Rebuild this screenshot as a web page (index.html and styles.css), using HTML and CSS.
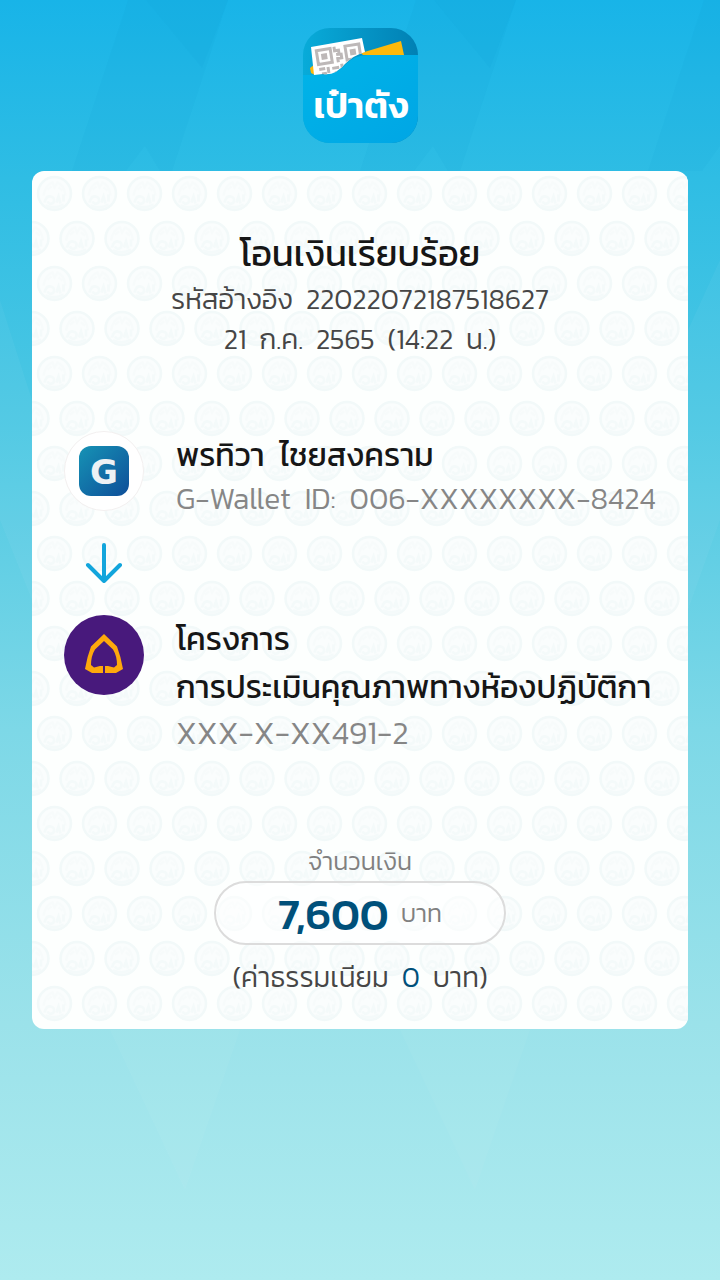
FILE: index.html
```html
<!DOCTYPE html>
<html lang="th">
<head>
<meta charset="utf-8">
<meta name="viewport" content="width=device-width, initial-scale=1">
<title>โอนเงินเรียบร้อย</title>
<link rel="stylesheet" href="styles.css">
</head>
<body>
<svg class="backdrop" viewBox="0 0 720 1280" preserveAspectRatio="xMidYMid slice" aria-hidden="true">
  <g fill="#0a98d0" fill-opacity=".08">
    <path d="M128 0H228L172 171H160L145 146L126 171H72Z"/>
    <path d="M146 0H228L202 68Z"/>
    <path d="M416 0H516L460 171H448L433 146L414 171H360Z"/>
    <path d="M434 0H516L490 68Z"/>
    <path d="M704 0H720V146L702 171H648Z"/>
  </g>
  <g fill="#fff" fill-opacity=".04">
    <path d="M0 300L32 400V600L0 520Z"/>
    <path d="M688 330L720 260V520L688 610Z"/>
    <path d="M110 1030H240L185 1190Z"/>
    <path d="M400 1030H530L475 1190Z"/>
  </g>
</svg>
<main class="page">
  <svg class="logo" viewBox="0 0 115 115" role="img" aria-label="เป๋าตัง">
    <defs>
      <linearGradient id="logoTop" x1="0" y1="0" x2="1" y2="0"><stop offset="0" stop-color="#08abd9"/><stop offset="1" stop-color="#0180b4"/></linearGradient>
      <linearGradient id="logoBody" x1="0" y1="0" x2="1" y2="1"><stop offset="0" stop-color="#00b4e8"/><stop offset="1" stop-color="#00a6e5"/></linearGradient>
      <clipPath id="logoShape"><rect width="115" height="115" rx="27"/></clipPath>
      <clipPath id="ticket"><path d="M8 19L59 10L62 24Q51 27 42 36Q32 48 20 46L11 47Z"/></clipPath>
    </defs>
    <g clip-path="url(#logoShape)">
      <rect width="115" height="115" fill="url(#logoTop)"/>
      <path d="M0 47H20Q34 46 42 37Q51 27 65 27H115V115H0Z" fill="url(#logoBody)"/>
      <path d="M58 25L98 13L101 27H60Z" fill="#fdb90b"/>
      <path d="M7 40L12 36V47L8 45Z" fill="#fdb90b"/>
      <g clip-path="url(#ticket)">
        <rect width="70" height="50" fill="#fff"/>
        <g transform="translate(11 21) rotate(-9)" fill="none" stroke="#bdb8b8" stroke-width="3">
          <path d="M2 2H16V16H2ZM31 2H45V16H31Z"/>
          <path d="M6 9H12M35 9H41" stroke-width="6"/>
          <path d="M20 1V5H24V9H21M26 8V13H22V17M2 21H8M11 20V26M15 22H22M25 19V25M29 20H35M4 26H9M17 27H25"/>
        </g>
      </g>
      <text x="58" y="90" text-anchor="middle" class="logo-text">เป๋าตัง</text>
    </g>
  </svg>

  <article class="card">
    <svg class="watermark" aria-hidden="true">
      <defs>
        <g id="seal" fill="none" stroke="#f2f9f9">
          <circle r="16.500" fill="#fafdfd" stroke-width="2.500"/>
          <path d="M-11 2Q-9 -9 -2 -11L0 -6L3 -11Q10 -8 11 2M-7 -4L-3 -7M4 -6L8 -3" stroke="#f7fbfb" stroke-width="2"/>
          <path d="M-10 9Q-8 2 -4 3Q1 4 -1 9Q-5 12 -7 8M2 9L4 3L6 10M9 1V8M-9 12Q0 16 9 11" stroke="#f4fafa" stroke-width="2.500"/>
        </g>
        <pattern id="seals" width="45" height="90" patternUnits="userSpaceOnUse">
          <use href="#seal" x="22.500" y="22.500"/>
          <use href="#seal" x="0" y="67.500"/>
          <use href="#seal" x="45" y="67.500"/>
        </pattern>
      </defs>
      <rect width="100%" height="100%" fill="url(#seals)"/>
    </svg>

    <header class="heading">
      <h1>โอนเงินเรียบร้อย</h1>
      <p>รหัสอ้างอิง  22022072187518627</p>
      <p>21  ก.ค.  2565  (14:22  น.)</p>
    </header>

    <section class="transfer">
      <div class="party">
        <svg class="avatar" viewBox="0 0 80 80" role="img" aria-label="G-Wallet">
          <defs><linearGradient id="wallet" x1="0" y1="0" x2="1" y2="1"><stop offset="0" stop-color="#1693b5"/><stop offset="1" stop-color="#0e4e99"/></linearGradient></defs>
          <circle cx="40" cy="40" r="39.500" fill="#fff" stroke="#f3f0f0"/>
          <rect x="15" y="15" width="50" height="50" rx="12" fill="url(#wallet)"/>
          <text x="40" y="53" text-anchor="middle" class="wallet-text">G</text>
        </svg>
        <div class="details">
          <h2>พรทิวา  ไชยสงคราม</h2>
          <p>G-Wallet  ID:  006-XXXXXXXX-8424</p>
        </div>
      </div>
      <svg class="arrow" viewBox="0 0 80 40" aria-hidden="true">
        <path d="M40 2V38M24 22L40 38L56 22" fill="none" stroke="#12a5dc" stroke-width="4" stroke-linecap="round" stroke-linejoin="round"/>
      </svg>
      <div class="party">
        <svg class="avatar" viewBox="0 0 80 80" role="img" aria-label="SCB">
          <circle cx="40" cy="40" r="40" fill="#48197c"/>
          <path d="M40 19L27 31.500Q23 42 21 54L28 58H39V51L36 51L30 52.500L27 50Q27 41 31 34.500L40 26L49 34.500Q53 41 53 50L50 52.500L44 51L41 51V58H52L59 54Q57 42 53 31.500Z" fill="#fea90c"/>
        </svg>
        <div class="details">
          <h2>โครงการ</h2>
          <h2>การประเมินคุณภาพทางห้องปฏิบัติกา</h2>
          <p class="account">XXX-X-XX491-2</p>
        </div>
      </div>
    </section>

    <section class="amount">
      <p class="label">จำนวนเงิน</p>
      <p class="total"><strong>7,600</strong> <span>บาท</span></p>
      <p class="fee">(ค่าธรรมเนียม  <span>0</span>  บาท)</p>
    </section>
  </article>
</main>
</body>
</html>
```
FILE: styles.css
```css
* { box-sizing: border-box; }
body {
  margin: 0;
  min-height: 100vh;
  position: relative;
  font-family: Kanit, Prompt, "Noto Sans Thai", Roboto, "Noto Sans", sans-serif;
  font-weight: 300;
  color: #464646;
  background: linear-gradient(#18b4e8 0%, #2fbde4 14%, #4bc7e3 32%, #7dd8e7 57%, #9be2ea 80%, #aeebef 100%);
}
h1, h2, p { margin: 0; }
.backdrop { position: absolute; inset: 0; width: 100%; height: 100%; }
.page {
  position: relative;
  display: flex;
  flex-direction: column;
  align-items: center;
  gap: 28px;
  padding: 28px 32px;
}
.logo { width: 115px; height: 115px; }
.logo-text { font-size: 36px; font-weight: 600; fill: #fff; }
.card {
  position: relative;
  width: 100%;
  padding: 58px 32px 20px;
  border-radius: 12px;
  background: #fdfffe;
  overflow: hidden;
}
.watermark { position: absolute; inset: 0; width: 100%; height: 100%; }
.heading, .transfer, .amount { position: relative; }
.heading p, .details, .fee { white-space: pre-wrap; }
.heading { text-align: center; font-size: 28px; line-height: 40px; }
.heading h1 { margin-bottom: 2px; font-size: 36px; line-height: 48px; font-weight: 400; color: #161616; }
.transfer { display: flex; flex-direction: column; margin-top: 72px; }
.party { display: flex; gap: 32px; }
.avatar { flex: none; width: 80px; height: 80px; }
.wallet-text { font: 700 34px "DejaVu Sans", sans-serif; fill: #edf1f4; }
.arrow { width: 80px; height: 40px; margin: 24px 0 32px; }
.details { display: flex; flex-direction: column; }
.details h2 { font-size: 32px; line-height: 48px; font-weight: 400; color: #161616; }
.details p { font-size: 30px; line-height: 40px; color: #868686; }
.details .account { font-size: 32px; line-height: 44px; }
.amount { display: flex; flex-direction: column; align-items: center; margin-top: 86px; text-align: center; }
.label { font-size: 25px; line-height: 40px; color: #808080; }
.total {
  display: flex;
  align-items: center;
  justify-content: center;
  gap: 12px;
  width: 292px;
  height: 64px;
  border: 2px solid #dcdcdc;
  border-radius: 32px;
  background: rgba(255, 255, 255, .5);
  font-size: 25px;
  color: #808080;
}
.total strong { font-size: 44px; font-weight: 500; color: #00507a; }
.fee { font-size: 28px; line-height: 64px; }
.fee span { color: #00507a; }
```
